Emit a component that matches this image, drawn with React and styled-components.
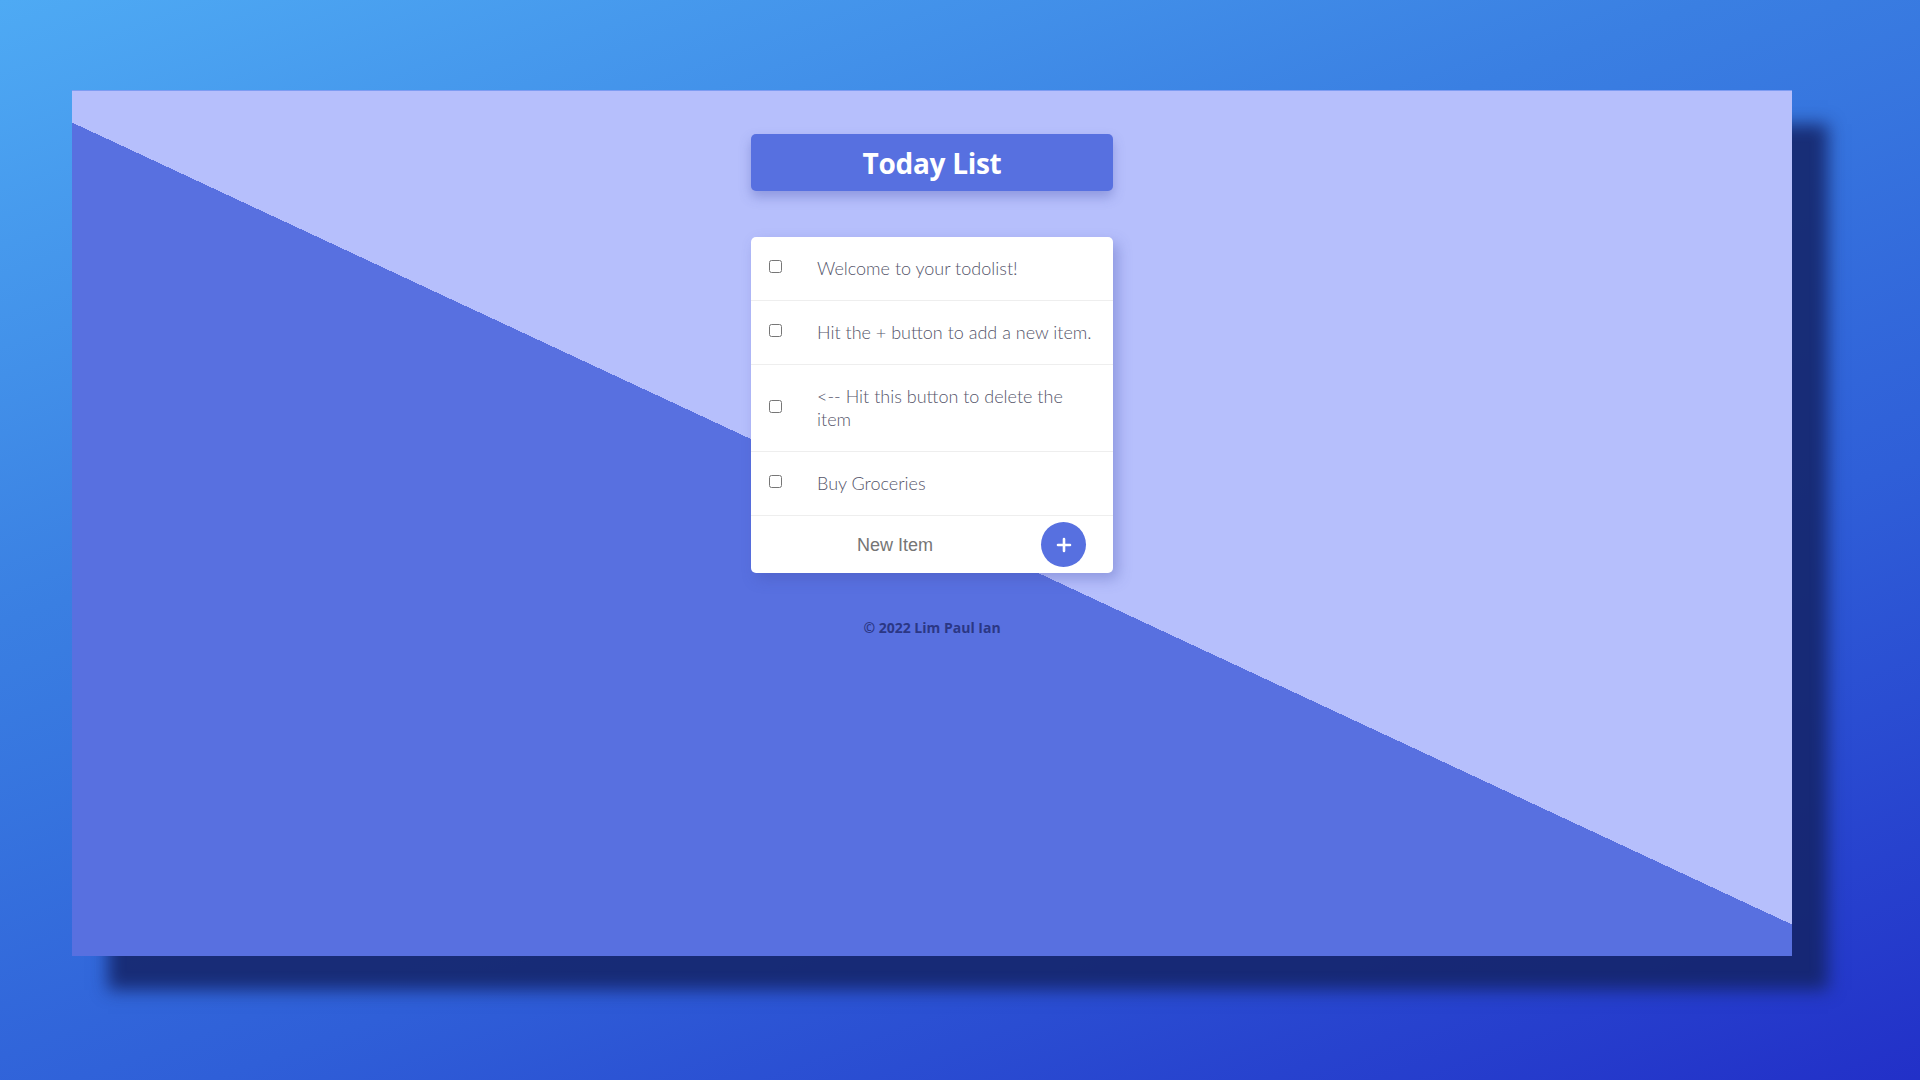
import styled, { createGlobalStyle } from 'styled-components'

const GlobalStyle = createGlobalStyle`
  html, body {
    margin: 0;
    padding: 0;
  }
  body {
    min-height: 100vh;
    background: linear-gradient(160deg, #4eaaf4 0%, #3a7fe2 35%, #2f5fd8 65%, #2230c8 100%);
    font-family: 'Open Sans', sans-serif;
  }
`

const Stage = styled.div`
  box-sizing: border-box;
  height: 100vh;
  padding: 90px 128px 124px 72px;
  display: flex;
`

const Frame = styled.main`
  flex: 1;
  display: flex;
  flex-direction: column;
  align-items: center;
  background: linear-gradient(25deg, #5870e0 50%, #b6bffc 50%);
  border-top: 1px solid #7d9cf2;
  box-shadow: 36px 34px 16px rgba(20, 36, 105, 0.88);
  padding-top: 43px;
`

const Heading = styled.div`
  box-sizing: border-box;
  width: 362px;
  height: 57px;
  display: flex;
  align-items: center;
  justify-content: center;
  background: #5770e0;
  border-radius: 5px;
  box-shadow: 0 6px 12px rgba(70, 80, 170, 0.35);
  margin-bottom: 46px;

  h1 {
    margin: 0;
    color: #fff;
    font-family: 'Open Sans', sans-serif;
    font-weight: 700;
    font-size: 28px;
    letter-spacing: -0.3px;
  }
`

const Card = styled.section`
  width: 362px;
  background: #fff;
  border-radius: 5px;
  box-shadow: 5px 6px 14px rgba(70, 80, 170, 0.35);
`

const Item = styled.div`
  display: flex;
  align-items: center;
  border-bottom: 1px solid #eeeeee;
  padding: 20px 14px 20px 18px;

  input {
    margin: 0 35px 0 0;
    width: 13px;
    height: 13px;
    flex-shrink: 0;
    position: relative;
    top: -2px;
  }

  p {
    margin: 0;
    font-family: Lato, 'Open Sans', sans-serif;
    font-weight: 300;
    font-size: 18px;
    line-height: 23px;
    color: #55556a;
  }
`

const NewItemForm = styled.form`
  display: flex;
  align-items: center;
  height: 57px;
  padding: 0 27px 0 0;
  box-sizing: border-box;
`

const NewItemInput = styled.input`
  flex: 1;
  min-width: 0;
  border: none;
  outline: none;
  background: transparent;
  height: 40px;
  padding: 2px 0 0 106px;
  font-family: 'Liberation Sans', Arial, sans-serif;
  font-size: 18px;
  color: #555;

  &::placeholder {
    color: #757575;
  }
`

const AddButton = styled.button`
  flex-shrink: 0;
  width: 45px;
  height: 45px;
  border-radius: 50%;
  border: none;
  background: #5770e0;
  color: #fff;
  display: flex;
  align-items: center;
  justify-content: center;
  padding: 0;
  cursor: pointer;
`

const Footer = styled.footer`
  margin-top: 45px;
  font-family: 'Open Sans', sans-serif;
  font-weight: 700;
  font-size: 14px;
  color: #2b3785;
`

const items = [
  'Welcome to your todolist!',
  'Hit the + button to add a new item.',
  '<-- Hit this button to delete the item',
  'Buy Groceries'
]

export default function App() {
  return (
    <>
      <GlobalStyle />
      <Stage>
        <Frame>
          <Heading>
            <h1>Today List</h1>
          </Heading>
          <Card>
            {items.map((text) => (
              <Item key={text}>
                <input type='checkbox' />
                <p>{text}</p>
              </Item>
            ))}
            <NewItemForm onSubmit={(e) => e.preventDefault()}>
              <NewItemInput type='text' placeholder='New Item' />
              <AddButton type='submit'>
                <svg width='16' height='16' viewBox='0 0 16 16'>
                  <path d='M8 2v12M2 8h12' stroke='#fff' strokeWidth='2.6' strokeLinecap='round' />
                </svg>
              </AddButton>
            </NewItemForm>
          </Card>
          <Footer>© 2022 Lim Paul Ian</Footer>
        </Frame>
      </Stage>
    </>
  )
}
